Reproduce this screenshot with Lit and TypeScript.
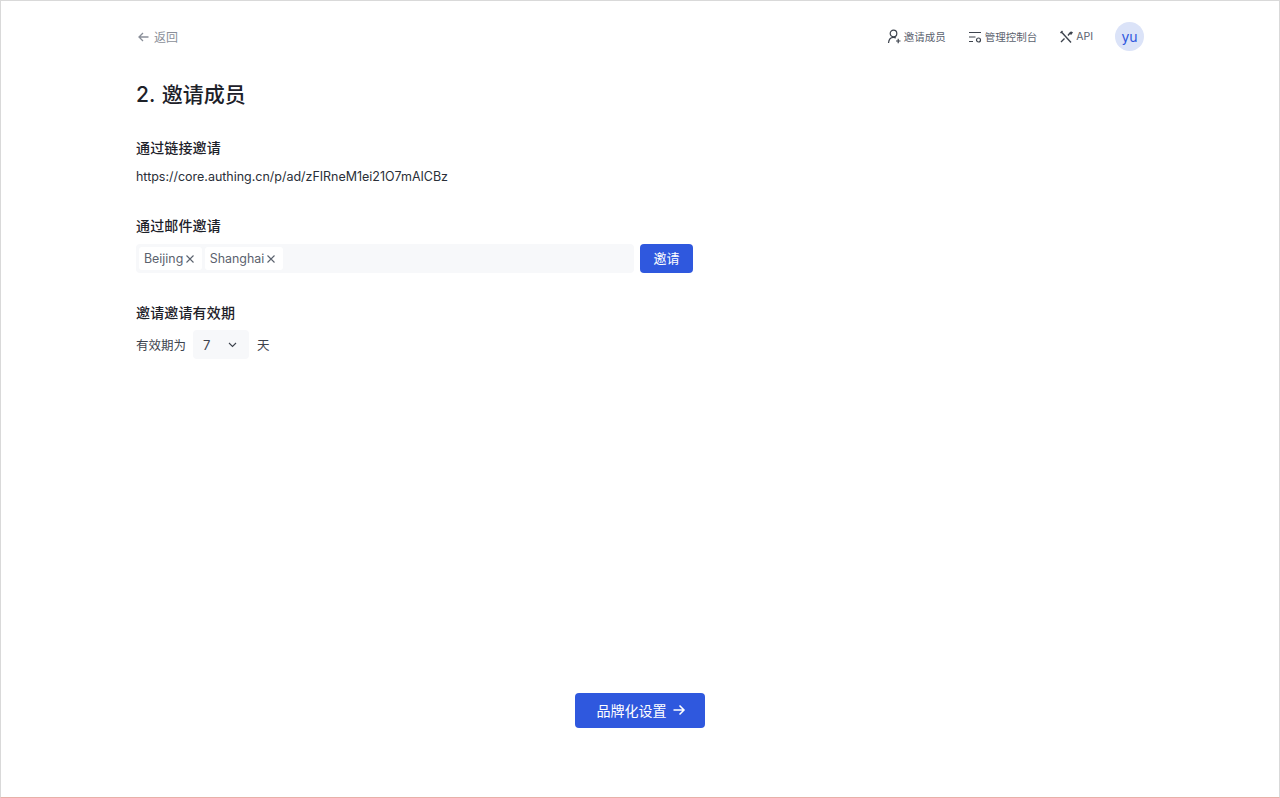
import { LitElement, html, css } from "lit";
import { customElement } from "lit/decorators.js";

@customElement("app-root")
export class AppRoot extends LitElement {
  static styles = css`
    :host {
      display: block;
      font-family: Inter, "Noto Sans CJK SC", sans-serif;
      color: #1d2129;
    }
    .page {
      box-sizing: border-box;
      height: 798px;
      background: #fff;
      border: 1px solid #d9d9d9;
      border-bottom-color: #e8b0a8;
      padding: 0 135px 69px;
      display: flex;
      flex-direction: column;
    }
    .top {
      display: flex;
      align-items: center;
      justify-content: space-between;
      padding-top: 21px;
      height: 29px;
    }
    .back {
      display: flex;
      align-items: center;
      gap: 4px;
      padding-left: 1px;
      font-size: 12px;
      color: #8a8f99;
    }
    .nav {
      display: flex;
      align-items: center;
      gap: 22px;
    }
    .nav-item {
      display: flex;
      align-items: center;
      gap: 3px;
      font-size: 10.500px;
      color: #5b626e;
    }
    .nav-item svg { color: #3d434d; }
    .avatar {
      width: 29px;
      height: 29px;
      border-radius: 50%;
      background: #dbe3f8;
      color: #2f58de;
      font-size: 14px;
      display: flex;
      align-items: center;
      justify-content: center;
    }
    h1 {
      margin: 29px 0 0;
      font-size: 21px;
      line-height: 30px;
      font-weight: 500;
      word-spacing: 1px;
      color: #1d2129;
    }
    h2 {
      margin: 0;
      font-size: 14px;
      line-height: 20px;
      font-weight: 500;
      letter-spacing: 0.150px;
      color: #1d2129;
    }
    .s1 { margin-top: 28px; }
    .s2 { margin-top: 29px; }
    .s3 { margin-top: 30px; }
    .url {
      margin-top: 9px;
      font-size: 12.500px;
      letter-spacing: -0.020px;
      line-height: 20px;
      color: #2a2f38;
    }
    .row {
      display: flex;
      gap: 6px;
      margin-top: 8px;
    }
    .input {
      box-sizing: border-box;
      width: 498px;
      height: 29px;
      background: #f7f8fa;
      border-radius: 4px;
      padding: 3px;
      display: flex;
      gap: 3px;
    }
    .tag {
      display: flex;
      align-items: center;
      gap: 3px;
      padding: 0 7.500px 0 5px;
      background: #fff;
      border-radius: 3px;
      font-size: 12.400px;
      color: #5b626e;
    }
    .btn {
      background: #2f58de;
      color: #fff;
      border: 0;
      padding: 0 0 2px;
      border-radius: 4px;
      font-family: inherit;
      display: flex;
      align-items: center;
      justify-content: center;
    }
    .invite {
      width: 53px;
      height: 29px;
      font-size: 13px;
    }
    .valid {
      display: flex;
      align-items: center;
      gap: 8px;
      margin-top: 7px;
      font-size: 12.500px;
      color: #3d434d;
    }
    .select {
      box-sizing: border-box;
      width: 56px;
      height: 29px;
      margin-left: -1px;
      background: #f7f8fa;
      border-radius: 4px;
      padding: 0 12px 0 10px;
      display: flex;
      align-items: center;
      justify-content: space-between;
      font-size: 13px;
    }
    .foot {
      margin-top: auto;
      display: flex;
      justify-content: center;
    }
    .next {
      width: 130px;
      height: 35px;
      font-size: 14px;
      gap: 5px;
      padding-left: 2px;
    }
    svg { display: block; fill: none; stroke: currentColor; }
  `;

  render() {
    return html`
      <div class="page">
        <div class="top">
          <div class="back">
            <svg width="13" height="14" viewBox="0 0 13 14" stroke-width="1.300"><path d="M11.500 7H2M6 3L2 7l4 4"/></svg>
            <span>返回</span>
          </div>
          <div class="nav">
            <div class="nav-item">
              <svg width="14" height="15" viewBox="0 0 14 15" stroke-width="1.200"><circle cx="6.500" cy="4.500" r="3.300"/><path d="M1.500 14c.3-3.500 2.200-5.700 5-5.700 1 0 1.700.2 2.400.6M9 12h4.500M11.200 9.700v4.600"/></svg>
              <span>邀请成员</span>
            </div>
            <div class="nav-item">
              <svg width="14" height="14" viewBox="0 0 14 14" stroke-width="1.200"><path d="M1 2.500h12M1 7h6.500M1 11.500h4"/><circle cx="10.500" cy="10" r="2"/></svg>
              <span>管理控制台</span>
            </div>
            <div class="nav-item">
              <svg width="14" height="14" viewBox="0 0 14 14" stroke-width="1.400"><path d="M2.500 2l9.500 10.500M1.500 3l2-2M9 5.500l2-2.500c.6-.7 1.500-.8 2-.5l-1 1.500.5.500M5.500 8.500L2 12"/></svg>
              <span>API</span>
            </div>
            <div class="avatar">yu</div>
          </div>
        </div>

        <h1>2. 邀请成员</h1>

        <section class="s1">
          <h2>通过链接邀请</h2>
          <div class="url">https://core.authing.cn/p/ad/zFIRneM1ei21O7mAICBz</div>
        </section>

        <section class="s2">
          <h2>通过邮件邀请</h2>
          <div class="row">
            <div class="input">
              <span class="tag">Beijing <svg width="8" height="8" viewBox="0 0 8 8" stroke-width="1.100"><path d="M.5.500l7 7M7.500.500l-7 7"/></svg></span>
              <span class="tag">Shanghai <svg width="8" height="8" viewBox="0 0 8 8" stroke-width="1.100"><path d="M.5.500l7 7M7.500.500l-7 7"/></svg></span>
            </div>
            <button class="btn invite">邀请</button>
          </div>
        </section>

        <section class="s3">
          <h2>邀请邀请有效期</h2>
          <div class="valid">
            <span>有效期为</span>
            <div class="select">
              <span>7</span>
              <svg width="9" height="6" viewBox="0 0 9 6" stroke-width="1.100"><path d="M1 1l3.500 3.500L8 1"/></svg>
            </div>
            <span>天</span>
          </div>
        </section>

        <div class="foot">
          <button class="btn next">
            <span>品牌化设置</span>
            <svg width="14" height="14" viewBox="0 0 14 14" stroke-width="1.500"><path d="M1.500 7h10.500M7.500 2.500L12 7l-4.500 4.500"/></svg>
          </button>
        </div>
      </div>
    `;
  }
}
